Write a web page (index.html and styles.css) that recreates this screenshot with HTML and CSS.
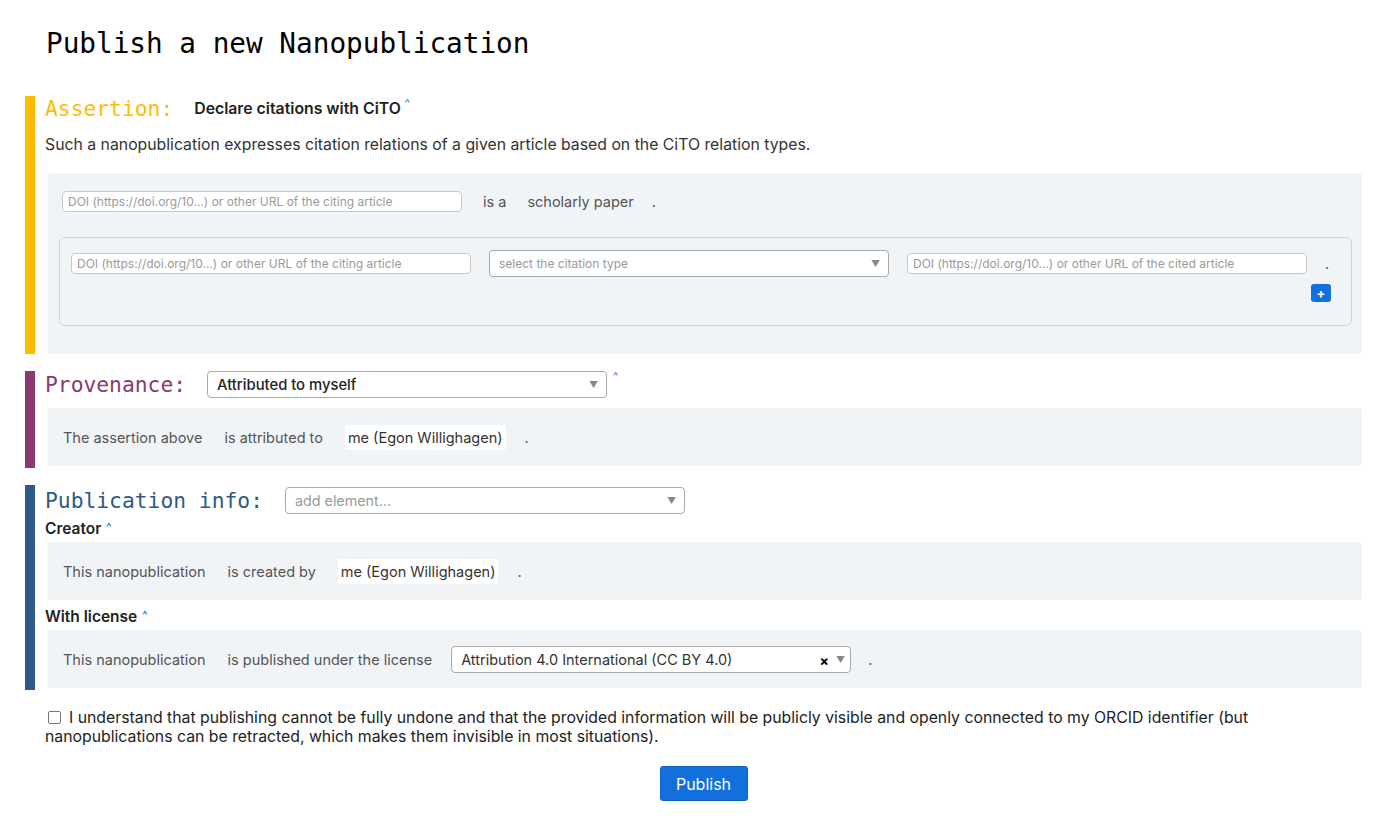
FILE: index.html
```html
<!DOCTYPE html>
<html lang="en">
<head>
<meta charset="utf-8">
<title>Publish a new Nanopublication</title>
<link rel="stylesheet" href="styles.css">
</head>
<body>
<div class="page">
  <h1 class="title">Publish a new Nanopublication</h1>

  <section class="part part-assertion">
    <div class="part-head">
      <span class="part-label label-assertion">Assertion:</span>
      <span class="template-name">Declare citations with CiTO</span><span class="caret">^</span>
    </div>
    <p class="desc">Such a nanopublication expresses citation relations of a given article based on the CiTO relation types.</p>
    <div class="stmt-box stmt-assert">
      <div class="row">
        <span class="field"><span class="ph">DOI (https://doi.org/10...) or other URL of the citing article</span></span>
        <span class="word">is a</span>
        <span class="word">scholarly paper</span>
        <span class="word dot">.</span>
      </div>
      <div class="repeat-box">
        <div class="row row-repeat">
          <span class="field"><span class="ph">DOI (https://doi.org/10...) or other URL of the citing article</span></span>
          <span class="select select-type"><span class="ph">select the citation type</span><span class="arrow">▼</span></span>
          <span class="field"><span class="ph">DOI (https://doi.org/10...) or other URL of the cited article</span></span>
          <span class="word">.</span>
        </div>
        <div class="add-row"><span class="add-btn">+</span></div>
      </div>
    </div>
  </section>

  <section class="part part-prov">
    <div class="part-head">
      <span class="part-label label-prov">Provenance:</span>
      <span class="select select-head"><span class="val">Attributed to myself</span><span class="arrow">▼</span></span><span class="caret caret-sel">^</span>
    </div>
    <div class="stmt-box stmt-small">
      <div class="row">
        <span class="word">The assertion above</span>
        <span class="word">is attributed to</span>
        <span class="chip">me (Egon Willighagen)</span>
        <span class="word dot">.</span>
      </div>
    </div>
  </section>

  <section class="part part-pubinfo">
    <div class="part-head">
      <span class="part-label label-pubinfo">Publication info:</span>
      <span class="select select-head"><span class="ph ph-lg">add element...</span><span class="arrow">▼</span></span>
    </div>
    <div class="sub-head">Creator <span class="caret">^</span></div>
    <div class="stmt-box stmt-small">
      <div class="row">
        <span class="word">This nanopublication</span>
        <span class="word">is created by</span>
        <span class="chip">me (Egon Willighagen)</span>
        <span class="word dot">.</span>
      </div>
    </div>
    <div class="sub-head sub-head-next">With license <span class="caret">^</span></div>
    <div class="stmt-box stmt-small">
      <div class="row">
        <span class="word">This nanopublication</span>
        <span class="word">is published under the license</span>
        <span class="select select-license"><span class="val val-plain">Attribution 4.0 International (CC BY 4.0)</span><span class="clear">×</span><span class="arrow">▼</span></span>
        <span class="word dot dot-tight">.</span>
      </div>
    </div>
  </section>

  <div class="footer">
    <p class="consent"><span class="checkbox"></span>I understand that publishing cannot be fully undone and that the provided information will be publicly visible and openly connected to my ORCID identifier (but nanopublications can be retracted, which makes them invisible in most situations).</p>
    <div class="actions"><button class="publish" type="button">Publish</button></div>
  </div>
</div>
</body>
</html>
```

FILE: styles.css
```css
* { box-sizing: border-box; }
html, body { margin: 0; padding: 0; background: #fff; }
body {
  font-family: Inter, "Noto Sans", sans-serif;
  font-size: 15.8px;
  color: #222;
}
.page {
  padding: 0 18px 0 25px;
}
.title {
  font-family: "DejaVu Sans Mono", "Liberation Mono", monospace;
  font-weight: normal;
  font-size: 27.7px;
  line-height: 32px;
  margin: 28px 0 0 21px;
  padding: 0;
  color: #000;
  height: 68px;
}
.part {
  border-left: 10px solid #ffbc00;
  padding-left: 10px;
  margin-bottom: 17px;
}
.part-assertion { border-left-color: #ffbc00; }
.part-prov { border-left-color: #8a3a6e; padding-bottom: 2px; }
.part-pubinfo { border-left-color: #2e5a85; padding-top: 2px; padding-bottom: 2px; }

.part-head {
  display: flex;
  align-items: center;
  height: 24px;
}
.part-prov .part-head, .part-pubinfo .part-head { height: 27px; }
.part-label {
  font-family: "DejaVu Sans Mono", "Liberation Mono", monospace;
  font-size: 21.3px;
  margin-right: 21px;
}
.label-assertion { color: #ffbc00; }
.label-prov { color: #8a3a6e; }
.label-pubinfo { color: #2e5a85; margin-right: 22px; }
.template-name {
  font-weight: 600;
  font-size: 15.8px;
  color: #222;
}
.caret {
  color: #1a73e8;
  font-size: 11px;
  line-height: 1;
  margin-left: 4px;
  align-self: flex-start;
  position: relative;
  top: 2px;
}
.caret-sel { margin-left: 6px; top: 0; }
.desc {
  margin: 15px 0 18px 0;
  line-height: 20px;
  color: #333;
}
.stmt-box {
  background: #f1f4f7;
  margin-left: 3px;
  border-radius: 3px;
  color: #555;
  font-size: 14.5px;
}
.stmt-assert {
  padding: 18px 10px 28px 11px;
}
.stmt-small {
  height: 58px;
  display: flex;
  align-items: center;
  padding: 0 15px;
}
.part-prov .stmt-small { margin-top: 10px; }
.row {
  display: flex;
  align-items: center;
  gap: 22px;
}
.stmt-assert > .row { padding-left: 3px; gap: 21px; }
.dot { margin-left: -3px; }
.dot-tight { margin-left: -5px; }
.field {
  display: flex;
  align-items: center;
  width: 400px;
  height: 21px;
  border: 1px solid #c8c8c8;
  border-radius: 4px;
  background: #fff;
  padding: 0 5px;
  font-size: 12px;
}
.ph { color: #9a9a9a; }
.ph-lg { font-size: 14.3px; color: #999; }
.word { white-space: nowrap; }
.repeat-box {
  margin-top: 25px;
  border: 1px solid #cfd2d6;
  border-radius: 6px;
  padding: 12px 20px 23px 11px;
}
.row-repeat { gap: 18px; }
.select {
  display: flex;
  align-items: center;
  height: 27px;
  width: 400px;
  border: 1px solid #aaa;
  border-radius: 4px;
  background: #fff;
  padding: 0 8px 0 9px;
  position: relative;
}
.select .arrow {
  margin-left: auto;
  font-size: 9px;
  color: #888;
}
.select-type { font-size: 12px; }
.select-head { font-size: 14.8px; }
.val { font-weight: 500; color: #222; }
.val-plain { font-weight: 400; color: #333; font-size: 14.5px; }
.select-license { padding-right: 5px; margin-left: -3px; }
.clear {
  margin-left: auto;
  margin-right: 7px;
  font-weight: 700;
  color: #000;
  font-size: 14px;
  position: relative;
  top: 1px;
}
.select-license .arrow { margin-left: 0; }
.add-row {
  display: flex;
  justify-content: flex-end;
  margin-top: 7px;
}
.add-btn {
  display: flex;
  align-items: center;
  justify-content: center;
  width: 20px;
  height: 18px;
  background: #1170dc;
  color: #fff;
  border-radius: 3px;
  font-size: 13px;
  font-weight: 700;
  line-height: 1;
}
.chip {
  background: #fff;
  padding: 0 3px;
  height: 25px;
  display: flex;
  align-items: center;
  border-radius: 2px;
  color: #333;
}
.sub-head {
  font-weight: 600;
  font-size: 15.5px;
  line-height: 18px;
  height: 18px;
  margin: 6px 0 4px 0;
  color: #222;
}
.sub-head-next { margin-top: 8px; }
.sub-head .caret { margin-left: 1px; top: -3px; position: relative; }
.footer {
  padding-left: 20px;
}
.consent {
  margin: 0;
  padding-top: 1px;
  line-height: 19px;
  color: #222;
}
.checkbox {
  display: inline-block;
  width: 13px;
  height: 13px;
  border: 1.5px solid #777;
  border-radius: 2px;
  margin: 0 8px 0 3px;
  vertical-align: -1px;
}
.actions {
  display: flex;
  justify-content: center;
  margin-top: 20px;
}
.publish {
  font-family: Inter, "Noto Sans", sans-serif;
  font-size: 16px;
  color: #fff;
  background: #1170dc;
  border: 1px solid #0d62c4;
  border-radius: 3px;
  width: 88px;
  height: 35px;
}
```
